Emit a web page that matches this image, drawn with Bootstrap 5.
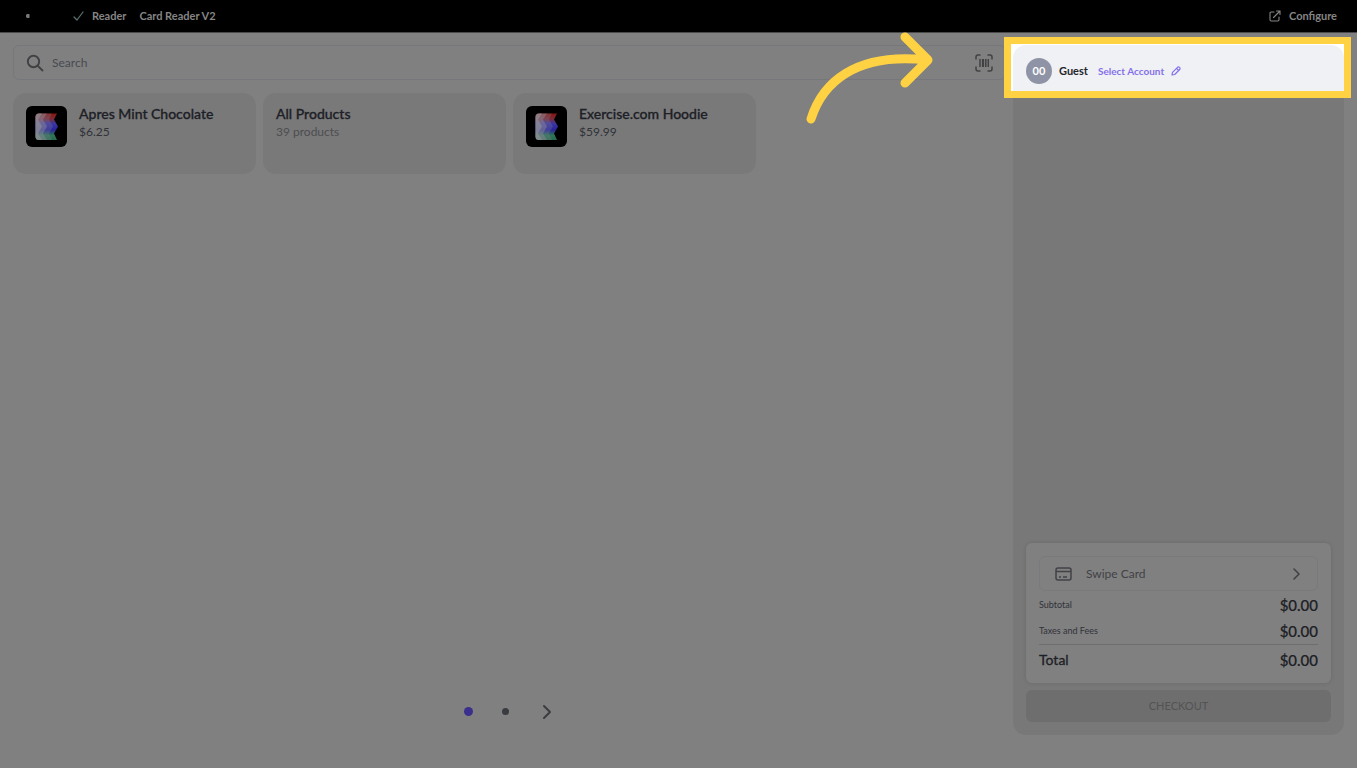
<!DOCTYPE html>
<html lang="en">
<head>
<meta charset="utf-8">
<meta name="viewport" content="width=device-width, initial-scale=1">
<title>Point of Sale</title>
<link href="https://cdn.jsdelivr.net/npm/bootstrap@5.3.0/dist/css/bootstrap.min.css" rel="stylesheet">
<style>
  :root { --ink: #1d2026; --muted-ink: #4c4d50; --panel: #797979; --page: #808080; --gold: #ffd243; }
  body { font-family: Lato, "Open Sans", sans-serif; font-size: 12px; line-height: 16px; color: var(--ink); background: var(--page); }
  svg { display: block; flex: none; fill: none; stroke: currentColor; stroke-linecap: round; stroke-linejoin: round; }
  svg.solid { stroke: none; }
  .topbar { height: 33px; background: #000; color: #858585; font-size: 11px; padding: 0 20px 1px 24px; border-bottom: 1px solid #4a4a4a; }
  .topbar a { color: inherit; }
  .brand-mark { color: #77777a; margin-right: 42px; }
  .device { gap: 13px; }
  .tick { color: #5d7570; }
  .workspace { display: grid; grid-template-columns: minmax(0, 3fr) minmax(0, 1fr); gap: 7px; padding: 12px 13px 33px; }
  .search-box { height: 35px; border: 1px solid #76777a; border-radius: 6px; padding: 0 12px; color: #404144; margin-bottom: 13px; }
  .search-box input { background: transparent; border: 0; outline: 0; padding: 0; color: inherit; }
  .search-box input::placeholder { color: #474a50; opacity: 1; }
  .product-grid { display: grid; grid-template-columns: repeat(4, minmax(0, 1fr)); gap: 7px; }
  .product { background: var(--panel); border: 0; border-radius: 13px; padding: 13px; min-height: 81px; color: var(--ink); }
  .thumb { width: 41px; height: 41px; }
  .title { font-size: 14px; font-weight: 500; line-height: 16px; -webkit-text-stroke: 0.3px; }
  .price, .count { line-height: 20px; }
  .price { color: #303238; }
  .count { color: var(--muted-ink); }
  .pager { height: 47px; padding-right: 4px; gap: 24px; }
  .pager button { background: none; border: 0; padding: 0; width: 13px; height: 20px; color: #3a3c41; display: grid; place-items: center; }
  .dot { width: 7px; height: 7px; border-radius: 50%; background: #393b40; }
  .dot.current { width: 9px; height: 9px; background: #3a2f8c; }
  .cart { background: #787878; border-radius: 13px; padding-bottom: 13px; }
  .spotlight { margin: -8px -7px 0 -9px; border: 7px solid var(--gold); background: #fff; padding: 1px 0 0 2px; }
  .guest { height: 46px; background: #f0f1f4; border-radius: 13px 13px 0 0; padding: 6px 13px 0; font-size: 11px; color: #24262b; gap: 7px; }
  .initials { width: 26px; height: 26px; border-radius: 50%; background: #8e93a5; color: #fff; }
  .guest a { color: #8470ea; font-size: 10px; gap: 7px; margin-left: 3px; }
  .arrow { left: -209px; top: -15px; color: var(--gold); }
  .summary { margin: 0 13px 7px; background: var(--page); border-radius: 6px; padding: 13px 13px 8px; box-shadow: 0 0 4px rgba(0, 0, 0, .12); }
  .swipe { height: 35px; border: 1px solid #797a7b; border-radius: 6px; background: none; color: #404246; padding: 0 15px; gap: 13px; margin-bottom: 1px; }
  .totals th { font-weight: 400; font-size: 9px; color: #303238; padding: 0; }
  .totals td { font-size: 15px; font-weight: 500; padding: 0; text-align: right; -webkit-text-stroke: 0.2px; }
  .totals tr { height: 26px; }
  .totals tfoot tr { height: 31px; border-top: 1px solid #6d6e70; }
  .totals tfoot th { font-size: 14px; color: var(--ink); -webkit-text-stroke: 0.3px; }
  .checkout { margin: 0 13px; height: 32px; border: 0; border-radius: 6px; background: #6e6e6e; color: #535353; font-size: 11px; }
</style>
</head>
<body class="min-vh-100 d-flex flex-column">
<header class="topbar d-flex align-items-center">
  <svg class="brand-mark solid" width="7" height="6" viewBox="0 0 7 6"><path fill="currentColor" d="M2 2 3 1h3L5 2l1 1-1 1 1 1H3L2 4z"/></svg>
  <div class="device d-flex align-items-center fw-bold">
    <span class="d-flex align-items-center gap-2">
      <svg class="tick" width="11" height="12" viewBox="0 0 11 12" stroke-width="1.200"><path d="M1 7l3 3 6-8"/></svg>Reader
    </span>
    <span>Card Reader V2</span>
  </div>
  <a href="#" class="ms-auto d-flex align-items-center gap-2 text-decoration-none fw-bold">
    <svg width="12" height="12" viewBox="0 0 12 12" stroke-width="1.100"><path d="M5 2H2.200Q1 2 1 3.200V9.800Q1 11 2.200 11H8.800Q10 11 10 9.800V7M4.500 7.500 11 1M7.500 1H11V4.500"/></svg>Configure</a>
</header>

<main class="workspace flex-grow-1">
  <section class="d-flex flex-column">
    <label class="search-box d-flex align-items-center gap-2">
      <svg width="18" height="18" viewBox="0 0 18 18" stroke-width="1.900"><circle cx="7.500" cy="7.500" r="5.700"/><path d="m11.800 11.800 4.700 4.700"/></svg>
      <input class="flex-grow-1" type="text" placeholder="Search" aria-label="Search products">
      <svg width="18" height="18" viewBox="0 0 18 18" stroke-width="1.500"><path d="M1 5V3Q1 1 3 1H5M13 1h2q2 0 2 2v2M17 13v2q0 2-2 2h-2M5 17H3q-2 0-2-2v-2"/><path stroke-linecap="butt" d="M5 5v8M10.800 5v8M13.300 5v8"/><path stroke-linecap="butt" stroke-width="2.200" d="M8 5v8"/></svg>
    </label>
    <div class="product-grid">
      <button class="product d-flex align-items-start text-start">
        <svg class="thumb solid" viewBox="0 0 41 41">
          <defs>
            <linearGradient id="hues" x2="0" y2="1"><stop offset="0" stop-color="#85150f"/><stop offset=".2" stop-color="#7c2c35"/><stop offset=".38" stop-color="#3a36a2"/><stop offset=".62" stop-color="#29239a"/><stop offset=".82" stop-color="#2e7556"/><stop offset="1" stop-color="#286a4c"/></linearGradient>
          </defs>
          <rect width="41" height="41" rx="6" fill="#000"/>
          <g id="mark-e"><path fill="url(#hues)" d="M13 7.500H31L28 13.500 32 20.500 28 27.500 31 34H13Q9.500 34 9.500 30.500V11Q9.500 7.500 13 7.500z"/><path fill="#858598" fill-opacity=".28" d="M13 7.500H26L23 13.500 27 20.500 23 27.500 26 34H13Q9.500 34 9.500 30.500V11Q9.500 7.500 13 7.500z"/><path fill="#8c8c98" fill-opacity=".45" d="M13 7.500H21L17 13.500 21 20.500 17 27.500 21 34H13Q9.500 34 9.500 30.500V11Q9.500 7.500 13 7.500z"/><path fill="#929296" fill-opacity=".6" d="M13 7.500H16L12 13.500 16 20.500 12 27.500 16 34H13Q9.500 34 9.500 30.500V11Q9.500 7.500 13 7.500z"/></g>
        </svg>
        <span class="d-block ms-2 ps-1"><span class="title d-block">Apres Mint Chocolate</span><span class="price d-block">$6.25</span></span>
      </button>
      <button class="product text-start d-flex align-items-start">
        <span><span class="title d-block">All Products</span><span class="count d-block">39 products</span></span>
      </button>
      <button class="product d-flex align-items-start text-start">
        <svg class="thumb solid" viewBox="0 0 41 41"><rect width="41" height="41" rx="6" fill="#000"/><use href="#mark-e"/></svg>
        <span class="d-block ms-2 ps-1"><span class="title d-block">Exercise.com Hoodie</span><span class="price d-block">$59.99</span></span>
      </button>
    </div>
    <nav class="pager mt-auto d-flex justify-content-center align-items-center" aria-label="Product pages">
      <button aria-label="Page 1"><span class="dot current"></span></button>
      <button aria-label="Page 2"><span class="dot"></span></button>
      <button class="ms-1" aria-label="Next page"><svg width="12" height="16" viewBox="0 0 12 16" stroke-width="2"><path d="m3 2 6 6-6 6"/></svg></button>
    </nav>
  </section>

  <aside class="cart position-relative d-flex flex-column">
    <svg class="arrow position-absolute" width="132" height="100" viewBox="0 0 132 100" stroke-width="9"><path d="M7 89C18 54 50 22 123 30M101 7l23 23-23 23"/></svg>
    <div class="spotlight">
      <div class="guest d-flex align-items-center">
        <span class="initials d-grid fw-bold text-center align-items-center">00</span>
        <span class="fw-bold">Guest</span>
        <a href="#" class="d-flex align-items-center text-decoration-none fw-bold">Select Account
          <svg width="10" height="10" viewBox="0 0 10 10" stroke-width="1.200"><path d="m1 9 .5-2.700L6.500 1.300Q7.500.4 8.500 1.400T8.700 3.500L3.700 8.500zM5.500 2.300 7.700 4.500"/></svg></a>
      </div>
    </div>
    <div class="summary mt-auto">
      <button class="swipe d-flex align-items-center w-100">
        <svg width="18" height="14" viewBox="0 0 18 14" stroke-width="1.500"><rect x="1" y="1" width="15" height="12" rx="2"/><path stroke-linecap="butt" d="M1 4.500H16M4 10h2M8 10h4"/></svg>
        <span>Swipe Card</span>
        <svg class="ms-auto" width="10" height="14" viewBox="0 0 10 14" stroke-width="1.600"><path d="m2 2 5 5-5 5"/></svg>
      </button>
      <table class="totals w-100">
        <tbody>
          <tr><th scope="row">Subtotal</th><td>$0.00</td></tr>
          <tr><th scope="row">Taxes and Fees</th><td>$0.00</td></tr>
        </tbody>
        <tfoot><tr><th scope="row">Total</th><td>$0.00</td></tr></tfoot>
      </table>
    </div>
    <button class="checkout" disabled>CHECKOUT</button>
  </aside>
</main>
<script src="https://cdn.jsdelivr.net/npm/bootstrap@5.3.0/dist/js/bootstrap.bundle.min.js"></script>
</body>
</html>
